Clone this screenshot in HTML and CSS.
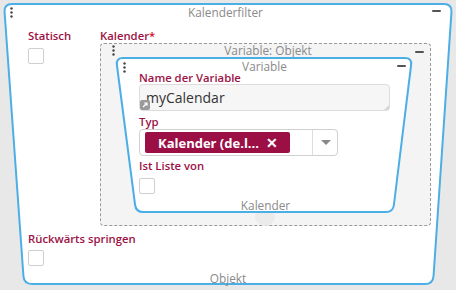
FILE: index.html
```html
<!DOCTYPE html>
<html lang="de">
<head>
<meta charset="utf-8">
<link rel="stylesheet" href="styles.css">
</head>
<body>
<div class="card outer">
  <svg class="shape" width="450" height="282" viewBox="0 0 450 282"><path d="M 9 1 H 441 Q 449 1 448.46 9 L 430.54 273 Q 430 281 422 281 H 29 Q 21 281 20.43 273 L 1.57 9 Q 1 1 9 1 Z"/></svg>
  <div class="hdr">
    <svg class="dots" width="3" height="11" viewBox="0 0 3 11"><circle cx="1.5" cy="1.5" r="1.2"/><circle cx="1.5" cy="5.5" r="1.2"/><circle cx="1.5" cy="9.5" r="1.2"/></svg>
    <span class="title">Kalenderfilter</span>
    <span class="minus"></span>
  </div>
  <div class="row1">
    <div class="field static">
      <div class="label">Statisch</div>
      <div class="check"></div>
    </div>
    <div class="field">
      <div class="label">Kalender<span class="req">*</span></div>
      <div class="dashed">
        <div class="hdr small">
          <svg class="dots" width="3" height="11" viewBox="0 0 3 11"><circle cx="1.5" cy="1.5" r="1.2"/><circle cx="1.5" cy="5.5" r="1.2"/><circle cx="1.5" cy="9.5" r="1.2"/></svg>
          <span class="title">Variable: Objekt</span>
          <span class="minus"></span>
        </div>
        <div class="plus"></div>
        <div class="card inner">
          <svg class="shape" width="298" height="156" viewBox="0 0 298 156"><path d="M 8 1 H 290 Q 297 1 296.1 8 L 278.9 148 Q 278 155 271 155 H 28 Q 21 155 20.1 148 L 1.9 8 Q 1 1 8 1 Z"/></svg>
          <div class="hdr inhdr">
            <svg class="dots" width="3" height="11" viewBox="0 0 3 11"><circle cx="1.5" cy="1.5" r="1.2"/><circle cx="1.5" cy="5.5" r="1.2"/><circle cx="1.5" cy="9.5" r="1.2"/></svg>
            <span class="title">Variable</span>
            <span class="minus"></span>
          </div>
          <div class="fields">
            <div class="label tight">Name der Variable</div>
            <div class="textarea">
              <span class="value">myCalendar</span>
              <svg class="resize" width="10" height="10" viewBox="0 0 10 10"><rect width="10" height="10" rx="2" fill="#9a9a9a"/><path d="M3 7 L7 3 M4.2 3 H7 V5.8" stroke="#fff" stroke-width="1.2" fill="none"/></svg>
              <span class="grip"></span>
            </div>
            <div class="label typ">Typ</div>
            <div class="select">
              <div class="tag"><span>Kalender (de.l...</span><span class="x">✕</span></div>
              <div class="sep"></div>
              <div class="arrow"></div>
            </div>
            <div class="label liste">Ist Liste von</div>
            <div class="check"></div>
          </div>
          <div class="footer">Kalender</div>
        </div>
      </div>
    </div>
  </div>
  <div class="row2">
    <div class="label">Rückwärts springen</div>
    <div class="check"></div>
  </div>
  <div class="footer">Objekt</div>
</div>
</body>
</html>
```

FILE: styles.css
```css
* { box-sizing: border-box; }
html, body { margin: 0; padding: 0; }
body {
  background: #e8e8e8;
  font-family: "Open Sans", "Noto Sans", sans-serif;
  width: 456px;
  height: 290px;
  overflow: hidden;
  padding: 3px 0 0 3px;
}
.card {
  position: relative;
  display: flex;
  flex-direction: column;
}
.card > * { position: relative; }
.card > .shape {
  position: absolute;
  left: 0;
  top: 0;
}
.shape path {
  fill: #fff;
  stroke: #4caee6;
  stroke-width: 2;
}
.outer { width: 450px; height: 282px; }
.hdr {
  display: grid;
  grid-template-columns: 22px 1fr 22px;
  align-items: center;
  height: 18px;
  padding: 0 12px 0 7px;
}
.hdr .dots { fill: #444; }
.hdr .title {
  text-align: center;
  font-size: 11.8px;
  line-height: 14px;
  color: #8a8a8a;
}
.hdr .minus {
  width: 9px;
  height: 2px;
  background: #555;
  border-radius: 1px;
  justify-self: end;
  margin-top: -2px;
}
.label {
  font-size: 11.3px;
  font-weight: 600;
  color: #9c1245;
  line-height: 14px;
  white-space: nowrap;
}
.req { color: #d0102b; }
.check {
  width: 16px;
  height: 16px;
  border: 1px solid #cfcfcf;
  border-radius: 2px;
  background: #fff;
}
.row1 {
  display: flex;
  margin-top: 8px;
  padding-left: 25px;
}
.static { width: 72px; }
.static .check { margin-top: 5px; }
.dashed {
  position: relative;
  width: 331px;
  height: 183px;
  border: 1px dashed #9a9a9a;
  border-radius: 4px;
  background: #f4f4f4;
}
.hdr.small {
  height: 12px;
  padding: 0 6px 0 11px;
}
.hdr.small .title { line-height: 12px; }
.hdr.small .minus { margin-top: 4px; }
.hdr.small .dots { margin-top: 1px; }
.plus {
  position: absolute;
  left: 154px;
  top: 162px;
  width: 20px;
  height: 20px;
  border-radius: 50%;
  background: #ebebeb;
}
.inner {
  width: 298px;
  height: 156px;
  margin: 1px 0 0 14px;
}
.inhdr {
  height: 14px;
  padding: 0 7px 0 8px;
}
.inhdr .title { line-height: 12px; margin-top: 1px; }
.inhdr .dots { margin-top: 5px; }
.inhdr .minus { margin-top: 2px; }
.fields {
  padding-left: 24px;
  display: flex;
  flex-direction: column;
  align-items: flex-start;
}
.label.tight { line-height: 13px; }
.textarea {
  position: relative;
  width: 251px;
  height: 27px;
  border: 1px solid #ddd;
  border-radius: 4px;
  background: #f6f6f6;
  padding: 1px 0 0 6px;
}
.value {
  font-size: 14px;
  line-height: 18px;
  color: #333;
}
.resize {
  position: absolute;
  left: 0;
  bottom: 0;
}
.grip {
  position: absolute;
  right: 0;
  bottom: 0;
  width: 0;
  height: 0;
  border-left: 5px solid transparent;
  border-bottom: 5px solid #d6d6d6;
}
.label.typ { margin-top: 4px; }
.select {
  display: flex;
  align-items: center;
  width: 199px;
  height: 27px;
  border: 1px solid #d0d0d0;
  border-radius: 4px;
  background: #fff;
  padding-left: 5px;
}
.tag {
  display: flex;
  align-items: center;
  width: 145px;
  height: 21px;
  background: #9b0f45;
  border-radius: 2px;
  color: #fff;
  font-size: 13px;
  font-weight: 700;
  padding-left: 13px;
  white-space: nowrap;
}
.tag .x {
  margin-left: 7px;
  font-size: 14px;
  font-weight: 700;
}
.sep {
  width: 1px;
  height: 25px;
  background: #ddd;
  margin-left: 22px;
}
.arrow {
  width: 0;
  height: 0;
  border-left: 5px solid transparent;
  border-right: 5px solid transparent;
  border-top: 5px solid #888;
  margin-left: 8px;
}
.label.liste { margin-top: 3px; }
.fields .check { margin-top: 5px; }
.footer {
  margin-top: auto;
  text-align: center;
  font-size: 11.8px;
  line-height: 14px;
  color: #8a8a8a;
}
.inner .footer { margin-left: 3px; margin-bottom: 1px; }
.row2 {
  margin-top: 6px;
  padding-left: 25px;
}
.row2 .check { margin-top: 4px; }
```
